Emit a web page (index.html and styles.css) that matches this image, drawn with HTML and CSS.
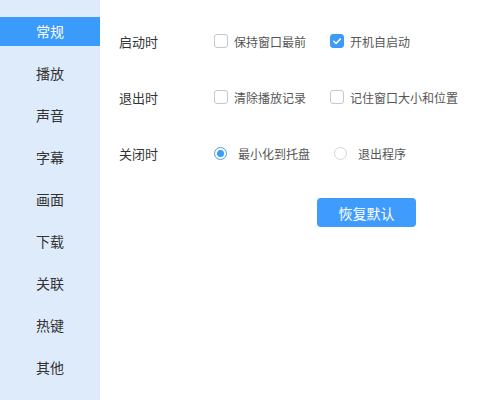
FILE: index.html
```html
<!DOCTYPE html>
<html lang="zh-CN">
<head>
<meta charset="utf-8">
<title>设置</title>
<link rel="stylesheet" href="styles.css">
</head>
<body>
<div class="settings">
  <nav class="sidebar">
    <div class="nav-item active">常规</div>
    <div class="nav-item">播放</div>
    <div class="nav-item">声音</div>
    <div class="nav-item">字幕</div>
    <div class="nav-item">画面</div>
    <div class="nav-item">下载</div>
    <div class="nav-item">关联</div>
    <div class="nav-item">热键</div>
    <div class="nav-item">其他</div>
  </nav>
  <main class="content">
    <div class="row">
      <div class="label">启动时</div>
      <label class="option check"><span class="box"></span>保持窗口最前</label>
      <label class="option check"><span class="box checked"><svg viewBox="0 0 14 14" width="14" height="14"><path d="M3.8 7.2 L6.1 9.4 L10.3 4.9" fill="none" stroke="#fff" stroke-width="1.5" stroke-linecap="round" stroke-linejoin="round"/></svg></span>开机自启动</label>
    </div>
    <div class="row">
      <div class="label">退出时</div>
      <label class="option check"><span class="box"></span>清除播放记录</label>
      <label class="option check"><span class="box"></span>记住窗口大小和位置</label>
    </div>
    <div class="row">
      <div class="label">关闭时</div>
      <label class="option radio"><span class="dot on"></span>最小化到托盘</label>
      <label class="option radio"><span class="dot"></span>退出程序</label>
    </div>
    <div class="actions">
      <button class="btn-primary" type="button">恢复默认</button>
    </div>
  </main>
</div>
</body>
</html>
```

FILE: styles.css
```css
html, body {
  margin: 0;
  padding: 0;
  background: #ffffff;
}

body {
  font-family: "Noto Sans CJK SC", "Noto Sans", sans-serif;
  color: #333333;
}

.settings {
  display: flex;
  width: 480px;
  height: 400px;
}

/* left navigation */
.sidebar {
  width: 100px;
  flex: none;
  background: #deebfb;
  padding-top: 17px;
  display: flex;
  flex-direction: column;
  gap: 13px;
}

.nav-item {
  height: 29px;
  line-height: 29px;
  text-align: center;
  font-size: 14px;
  color: #333333;
}

.nav-item.active {
  background: #3b9bfb;
  color: #ffffff;
}

/* settings panel */
.content {
  flex: 1;
  padding: 31px 0 0 19px;
  display: flex;
  flex-direction: column;
  gap: 36px;
}

.row {
  display: flex;
  align-items: center;
  height: 20px;
}

.label {
  width: 95px;
  flex: none;
  font-size: 13px;
  color: #333333;
}

.option {
  display: flex;
  align-items: center;
  flex: none;
  white-space: nowrap;
  font-size: 12px;
  color: #555555;
}

.option.check {
  width: 116px;
  gap: 6px;
}

.option.radio {
  width: 120px;
  gap: 11px;
}

.option:last-child {
  width: auto;
}

.box {
  width: 14px;
  height: 14px;
  flex: none;
  box-sizing: border-box;
  border: 1px solid #c4c8cf;
  border-radius: 3px;
  background: #ffffff;
  display: flex;
}

.box.checked {
  background: #3d9bf7;
  border-color: #3d9bf7;
}

.box.checked svg {
  margin: -1px;
}

.dot {
  width: 13px;
  height: 13px;
  flex: none;
  box-sizing: border-box;
  border: 1px solid #d2d5db;
  border-radius: 50%;
  background: #ffffff;
  display: flex;
  align-items: center;
  justify-content: center;
}

.dot.on {
  border-color: #4a9ef0;
}

.dot.on::after {
  content: "";
  width: 7px;
  height: 7px;
  border-radius: 50%;
  background: #3d9bf7;
}

.actions {
  margin-top: -1px;
  padding-left: 198px;
}

.btn-primary {
  width: 99px;
  height: 29px;
  border: none;
  border-radius: 4px;
  background: #409cfc;
  color: #ffffff;
  font-family: inherit;
  font-size: 14px;
  padding: 0;
}
```
